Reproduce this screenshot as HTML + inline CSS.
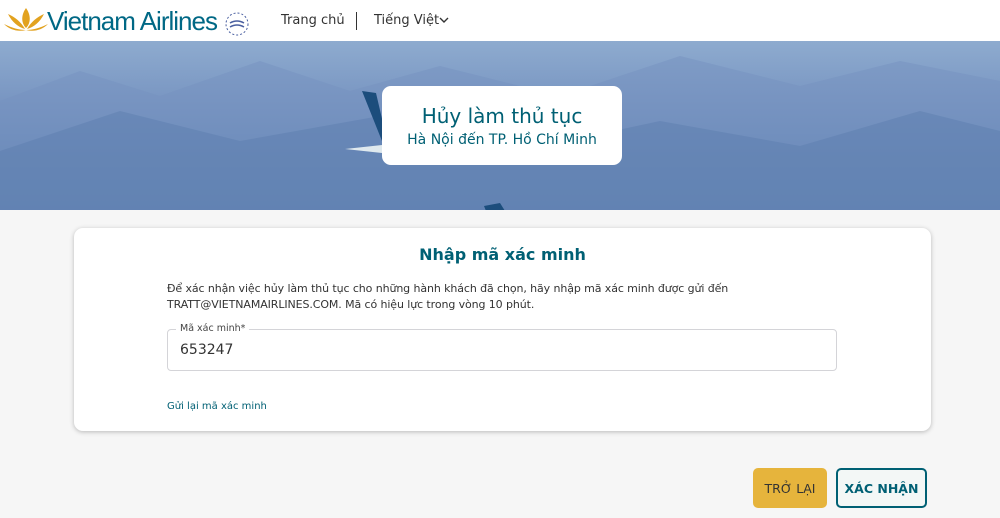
<!DOCTYPE html>
<html><head><meta charset="utf-8"><style>
*{margin:0;padding:0;box-sizing:border-box}
body{width:1000px;height:518px;overflow:hidden;background:#f6f6f6;font-family:"DejaVu Sans","Liberation Sans",sans-serif;position:relative}
.hdr{position:absolute;left:0;top:0;width:1000px;height:41px;background:#fff}
.logo{position:absolute;left:47px;top:6px;font-size:26px;color:#006885;letter-spacing:-1px;font-family:"Liberation Sans",sans-serif}
.nav{position:absolute;top:13px;font-size:13px;color:#333}
.banner{position:absolute;left:0;top:41px;width:1000px;height:169px;background:linear-gradient(180deg,#8eabcf 0%,#7996c2 35%,#6587b7 70%,#5c7fb1 100%);overflow:hidden}
.tbox{position:absolute;left:382px;top:86px;width:240px;height:79px;background:#fff;border-radius:9px;text-align:center;color:#006074}
.card{position:absolute;left:74px;top:228px;width:857px;height:203px;background:#fff;border-radius:9px;box-shadow:0 1px 5px rgba(0,0,0,.25)}
.btn{position:absolute;top:468px;height:40px;border-radius:5px;font-size:12.5px;font-weight:bold;display:flex;align-items:center;justify-content:center}
</style></head><body>
<div class="hdr">
<svg style="position:absolute;left:4px;top:6px" width="44" height="28" viewBox="0 0 44 28"><g fill="#e2a21f"><path d="M22 2 C17 9 17 17 22 22 C27 17 27 9 22 2Z"/><path d="M4 8 C8 16 14 21 21 23 C17 16 11 11 4 8Z"/><path d="M40 8 C36 16 30 21 23 23 C27 16 33 11 40 8Z"/><path d="M0 18 C8 22 15 24 22 24 C14 26 6 24 0 18Z"/><path d="M44 18 C36 22 29 24 22 24 C30 26 38 24 44 18Z"/></g></svg>
<div class="logo">Vietnam Airlines</div>
<svg style="position:absolute;left:222px;top:9px" width="30" height="28" viewBox="0 0 30 28"><circle cx="15" cy="15" r="11" fill="none" stroke="#4a5fa0" stroke-width="1" stroke-dasharray="2 2"/><path d="M8 14 q7 -4 14 0 M8 18 q7 -4 14 0" stroke="#4a5fa0" stroke-width="1.5" fill="none"/></svg>
<div class="nav" style="left:281px">Trang chủ</div>
<div style="position:absolute;left:356px;top:12px;width:1px;height:18px;background:#333"></div>
<div class="nav" style="left:374px">Tiếng Việt</div>
<svg style="position:absolute;left:439px;top:16px" width="10" height="8"><path d="M1 2 L5 6 L9 2" stroke="#333" stroke-width="1.4" fill="none"/></svg>
</div>
<div class="banner">
<svg width="1000" height="169" style="position:absolute;left:0;top:0"><path d="M0 60 L80 30 L160 55 L260 20 L350 50 L440 25 L560 55 L680 15 L800 45 L900 20 L1000 40 L1000 169 L0 169Z" fill="#7592bf" opacity=".5"/><path d="M0 110 L120 70 L240 100 L380 75 L520 110 L660 80 L800 105 L920 70 L1000 90 L1000 169 L0 169Z" fill="#5a7cae" opacity=".45"/><path d="M362 50 L376 52 L386 95 L382 100Z" fill="#1c4d7c"/><path d="M345 108 L382 104 L382 112Z" fill="#dfe9ee"/><path d="M484 165 L500 162 L505 170 L486 170Z" fill="#1c4d7c"/></svg>
</div>
<div class="tbox"><div style="font-size:20px;margin-top:18px">Hủy làm thủ tục</div><div style="font-size:14px;margin-top:4px">Hà Nội đến TP. Hồ Chí Minh</div></div>
<div class="card">
<div style="position:absolute;left:0;width:857px;top:17px;text-align:center;font-size:16px;font-weight:bold;color:#006074">Nhập mã xác minh</div>
<div style="position:absolute;left:93px;top:53px;font-size:11px;line-height:16px;color:#333;width:620px;letter-spacing:-0.1px">Để xác nhận việc hủy làm thủ tục cho những hành khách đã chọn, hãy nhập mã xác minh được gửi đến TRATT@VIETNAMAIRLINES.COM. Mã có hiệu lực trong vòng 10 phút.</div>
<div style="position:absolute;left:93px;top:101px;width:670px;height:42px;border:1px solid #d4d4d8;border-radius:4px"></div>
<div style="position:absolute;left:102px;top:95px;padding:0 4px;background:#fff;font-size:9.5px;color:#444">Mã xác minh*</div>
<div style="position:absolute;left:106px;top:114px;font-size:14px;color:#333">653247</div>
<div style="position:absolute;left:93px;top:173px;font-size:10px;color:#006074">Gửi lại mã xác minh</div>
</div>
<div class="btn" style="left:753px;width:74px;background:#e6b43c;color:#333;font-weight:normal">TRỞ LẠI</div>
<div class="btn" style="left:836px;width:91px;background:#f3f7f6;border:2px solid #006074;color:#006074">XÁC NHẬN</div>
</body></html>
